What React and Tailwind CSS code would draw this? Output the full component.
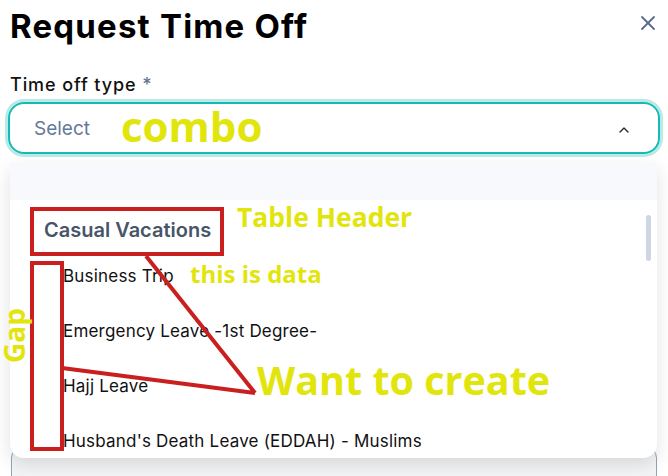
import React from 'react';
import { X, ChevronUp } from 'lucide-react';

const leaveTypes = [
  'Business Trip',
  'Emergency Leave -1st Degree-',
  'Hajj Leave',
  "Husband's Death Leave (EDDAH) - Muslims",
];

// yellow / red markup drawn over the form
function Annotations() {
  const note = "absolute font-bold text-[#e2e50c] leading-none whitespace-nowrap [font-family:'Open_Sans',sans-serif]";
  return (
    <div className="pointer-events-none absolute inset-0">
      <div className="absolute left-[30px] top-[207px] w-[194px] h-[49px] border-[4px] border-[#c91f1f]" />
      <div className="absolute left-[30px] top-[261px] w-[34px] h-[190px] border-[4px] border-[#c91f1f]" />
      <svg className="absolute left-0 top-0" width="668" height="476">
        <line x1="146" y1="256" x2="255" y2="393" stroke="#c91f1f" strokeWidth="4" />
        <line x1="62" y1="368" x2="255" y2="393" stroke="#c91f1f" strokeWidth="4" />
      </svg>
      <span className={`${note} left-[121px] top-[105px] text-[42px]`}>combo</span>
      <span className={`${note} left-[237px] top-[204px] text-[26.5px]`}>Table Header</span>
      <span className={`${note} left-[190px] top-[262px] text-[24px]`}>this is data</span>
      <span className={`${note} left-[257px] top-[361px] text-[39.5px]`}>Want to create</span>
      <span className={`${note} left-0 top-[308px] text-[28px] leading-[24px] [writing-mode:vertical-rl] rotate-180`}>Gap</span>
    </div>
  );
}

export default function App() {
  return (
    <div className="relative w-[668px] h-[476px] overflow-hidden bg-white [font-family:Inter,sans-serif]">
      {/* Header */}
      <div className="flex items-start justify-between pl-[10px] pr-[8px] pt-[7px]">
        <h1 className="text-[33px] font-bold leading-[38px] tracking-[1.2px] text-black">
          Request Time Off
        </h1>
        <button className="mt-[4px] text-[#5b6a8f]">
          <X size={24} strokeWidth={1.8} />
        </button>
      </div>

      {/* Time off type */}
      <div className="mt-[29px] px-[8px]">
        <label className="block pl-[2px] text-[18px] font-medium leading-[22px] tracking-[0.9px] text-[#111]">
          Time off type <span className="text-[#64748b]">*</span>
        </label>
        <div className="mt-[6px] flex h-[52px] items-center justify-between rounded-[16px] border-2 border-[#17bab3] pl-[24px] pr-[26px] ring-[3px] ring-[#17bab3]/30">
          <span className="pt-[3px] text-[19px] text-[#66789a]">Select</span>
          <ChevronUp size={16} strokeWidth={2} className="mt-[3px] text-[#1e293b]" />
        </div>
      </div>

      {/* field underneath the open menu */}
      <div className="mx-[11px] mt-[292px] h-[60px] rounded-[12px] border border-[#94a3b8] bg-[#f3f4f6]" />

      {/* Dropdown menu */}
      <div className="absolute left-[10px] top-[163px] w-[647px] h-[295px] overflow-hidden rounded-b-[14px] bg-white shadow-[0_6px_18px_rgba(0,0,0,0.12)]">
        <div className="h-[37px] bg-[#f8f9fd]" />
        <div className="pt-[11px]">
          <div className="h-[38px] pl-[34px] text-[20px] font-semibold leading-[38px] text-[#475569]">
            Casual Vacations
          </div>
          {leaveTypes.map((name) => (
            <div key={name} className="h-[55px] pl-[53px] text-[17px] leading-[55px] tracking-[0.2px] text-[#111]">
              {name}
            </div>
          ))}
        </div>
        <div className="absolute right-[6px] top-[52px] h-[46px] w-[5px] rounded-full bg-[#cfd6e3]" />
      </div>

      <Annotations />
    </div>
  );
}
